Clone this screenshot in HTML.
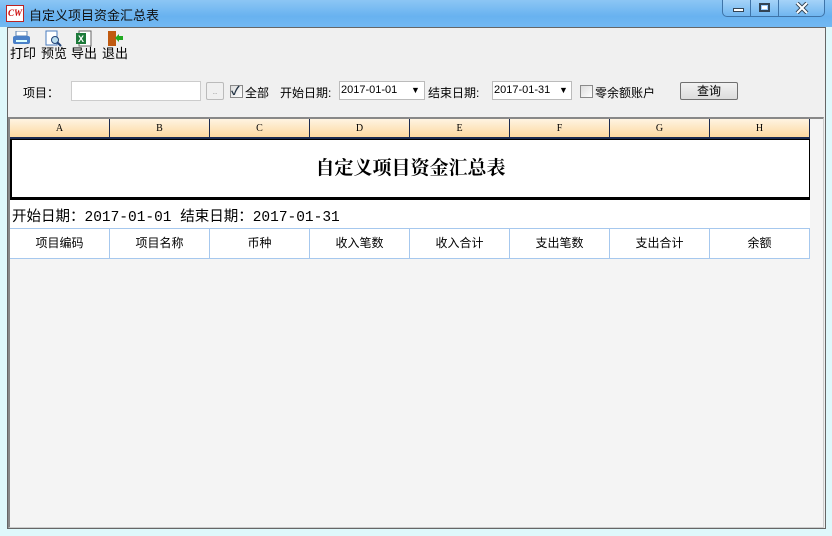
<!DOCTYPE html>
<html><head><meta charset="utf-8"><style>
*{margin:0;padding:0;box-sizing:border-box}
body{width:832px;height:536px;overflow:hidden;background:#dff8fb;font-family:"Liberation Sans","Noto Sans CJK SC",sans-serif;font-size:12px;color:#000;position:relative}
.abs{position:absolute}
#title{left:0;top:0;width:832px;height:27px;background:linear-gradient(#8cc6f4,#68b2f0 60%,#72b8f2)}
#ctrl{left:722px;top:0;width:103px;height:17px;border:1px solid #3f74a8;border-top:none;border-radius:0 0 5px 5px;background:linear-gradient(#a5d3f8,#70b6f0)}
#main{left:7px;top:27px;width:819px;height:502px;background:#f0f0f0;border:1px solid #666}
#grid{left:8px;top:117px;width:816px;height:411px;background:#f4f4f4;border-top:2px solid #888;border-left:2px solid #888;border-right:1px solid #ccc;border-bottom:1px solid #ccc}
.col{top:119px;height:20px;width:100px;background:linear-gradient(#fff4e2,#fdd9a0);border-right:1px solid #1a2a50;border-bottom:2px solid #1a2a50;font-family:"Liberation Serif",serif;font-size:10px;text-align:center;line-height:20px}
.hd{top:229px;height:30px;width:100px;border-right:1px solid #a6c8ee;border-bottom:1px solid #a6c8ee;background:#fff;text-align:center;line-height:28px;font-size:12px}
.tb{font-size:13px;text-align:center;line-height:14px}
.date{height:19px;background:#fff;border:1px solid #bbb;font-family:"Liberation Sans Narrow","Liberation Sans",sans-serif;font-size:11px;line-height:17px;padding-left:1px}
.cb{width:13px;height:13px;border:1px solid #8a8a8a;background:linear-gradient(135deg,#ddd,#fff)}
</style></head><body>
<div id="title" class="abs"></div>
<div class="abs" style="left:6px;top:5px;width:18px;height:17px;background:#fff;border:1px solid #b22;color:#c00;font:bold italic 9px 'Liberation Serif',serif;line-height:15px;text-align:center">CW</div>
<div class="abs" style="left:29px;top:5px;font-size:13px;color:#111">自定义项目资金汇总表</div>
<div id="ctrl" class="abs"></div>
<div class="abs" style="left:750px;top:0;width:1px;height:16px;background:#3f74a8"></div>
<div class="abs" style="left:778px;top:0;width:1px;height:16px;background:#3f74a8"></div>
<div class="abs" style="left:733px;top:8px;width:11px;height:4px;background:#fff;border:1px solid #345"></div>
<div class="abs" style="left:759px;top:3px;width:11px;height:9px;border:2px solid #345;background:#fff;box-shadow:inset 0 0 0 1px #9cf"></div>
<svg class="abs" style="left:795px;top:2px" width="14" height="12"><path d="M2 1 L12 11 M12 1 L2 11" stroke="#345" stroke-width="4"/><path d="M2 1 L12 11 M12 1 L2 11" stroke="#fff" stroke-width="2"/></svg>
<div id="main" class="abs"></div>
<svg class="abs" style="left:12px;top:31px" width="20" height="15"><rect x="4" y="0" width="11" height="5" fill="#fff" stroke="#5880b0"/><rect x="1" y="5" width="17" height="8" rx="2" fill="#4a80c8"/><rect x="4" y="9" width="11" height="2" fill="#dff"/></svg>
<svg class="abs" style="left:45px;top:30px" width="18" height="17"><rect x="1" y="1" width="11" height="14" fill="#fff" stroke="#4a7cbf"/><circle cx="10" cy="10" r="3.5" fill="#bde" stroke="#247"/><line x1="12" y1="12" x2="16" y2="16" stroke="#247" stroke-width="2"/></svg>
<svg class="abs" style="left:75px;top:30px" width="18" height="17"><rect x="4" y="1" width="12" height="15" fill="#fff" stroke="#666"/><rect x="1" y="3" width="10" height="11" fill="#1d7a3a"/><text x="3" y="12" font-size="9" font-weight="bold" fill="#fff" font-family="Liberation Sans">X</text></svg>
<svg class="abs" style="left:106px;top:30px" width="18" height="17"><rect x="2" y="1" width="8" height="15" fill="#c05a10"/><path d="M9 8 L13 4 L13 6 L17 6 L17 10 L13 10 L13 12 Z" fill="#2a2"/></svg>
<div class="abs tb" style="left:10px;top:47px">打印</div>
<div class="abs tb" style="left:41px;top:47px">预览</div>
<div class="abs tb" style="left:71px;top:47px">导出</div>
<div class="abs tb" style="left:102px;top:47px">退出</div>
<div class="abs" style="left:23px;top:84px">项目：</div>
<div class="abs" style="left:71px;top:81px;width:130px;height:20px;background:#fff;border:1px solid #ccc"></div>
<div class="abs" style="left:206px;top:82px;width:18px;height:18px;border:1px solid #bbb;border-radius:2px;font-size:8px;color:#888;text-align:center;line-height:18px">..</div>
<div class="abs cb" style="left:230px;top:85px"></div>
<div class="abs" style="left:231px;top:82px;font-size:12px;color:#234;font-weight:bold">✓</div>
<div class="abs" style="left:245px;top:84px">全部</div>
<div class="abs" style="left:280px;top:84px">开始日期:</div>
<div class="abs date" style="left:339px;top:81px;width:86px">2017-01-01</div>
<div class="abs" style="left:411px;top:85px;font-size:9px">▼</div>
<div class="abs" style="left:428px;top:84px">结束日期:</div>
<div class="abs date" style="left:492px;top:81px;width:80px">2017-01-31</div>
<div class="abs" style="left:559px;top:85px;font-size:9px">▼</div>
<div class="abs cb" style="left:580px;top:85px"></div>
<div class="abs" style="left:595px;top:84px">零余额账户</div>
<div class="abs" style="left:680px;top:82px;width:58px;height:18px;border:1px solid #707070;border-radius:2px;background:linear-gradient(#f2f2f2,#dcdcdc);text-align:center;line-height:16px;font-size:12px">查询</div>
<div id="grid" class="abs"></div>
<div class="abs" style="left:10px;top:119px;width:800px;height:140px;background:#fff"></div>
<div class="abs col" style="left:10px">A</div><div class="abs col" style="left:110px">B</div><div class="abs col" style="left:210px">C</div><div class="abs col" style="left:310px">D</div><div class="abs col" style="left:410px">E</div><div class="abs col" style="left:510px">F</div><div class="abs col" style="left:610px">G</div><div class="abs col" style="left:710px">H</div>
<div class="abs" style="left:10px;top:139px;width:800px;height:61px;border:1px solid #000;border-left-width:2px;border-bottom:3px solid #000;background:#fff;text-align:center;line-height:58px;font-size:19px;font-weight:bold;font-family:'Liberation Serif','Noto Serif CJK SC',serif">自定义项目资金汇总表</div>
<div class="abs" style="left:12px;top:205px;font-size:14.5px;font-family:'Liberation Mono','Noto Sans CJK SC',monospace">开始日期：2017-01-01 结束日期：2017-01-31</div>
<div class="abs" style="left:10px;top:229px;width:1px;height:30px;background:#a6c8ee"></div>
<div class="abs" style="left:10px;top:228px;width:800px;height:1px;background:#a6c8ee"></div>
<div class="abs hd" style="left:10px">项目编码</div><div class="abs hd" style="left:110px">项目名称</div><div class="abs hd" style="left:210px">币种</div><div class="abs hd" style="left:310px">收入笔数</div><div class="abs hd" style="left:410px">收入合计</div><div class="abs hd" style="left:510px">支出笔数</div><div class="abs hd" style="left:610px">支出合计</div><div class="abs hd" style="left:710px">余额</div>
</body></html>
